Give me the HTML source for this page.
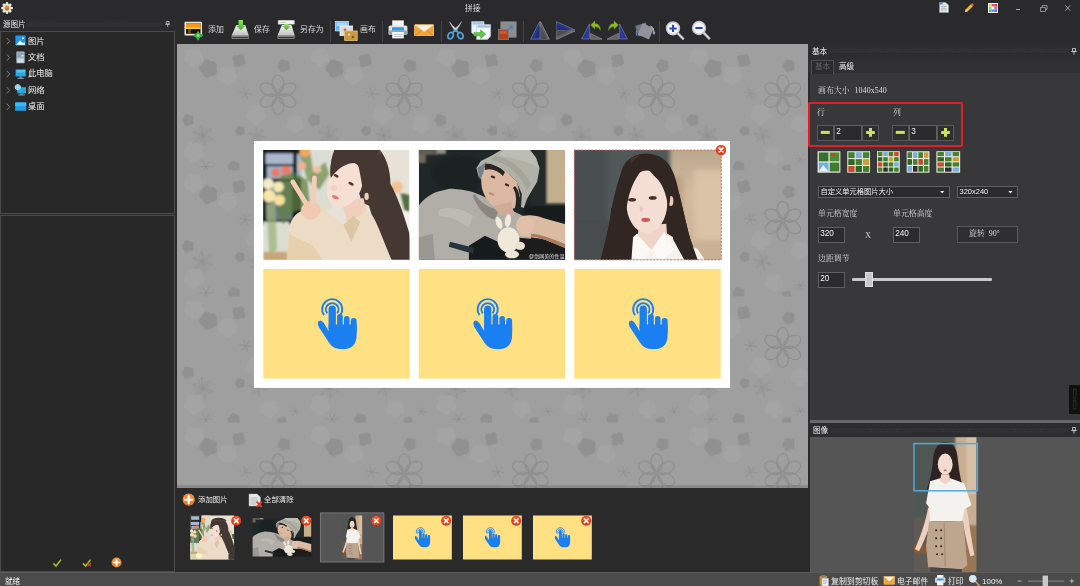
<!DOCTYPE html>
<html lang="zh-CN">
<head>
<meta charset="utf-8">
<title>拼接</title>
<style>
*{box-sizing:border-box;margin:0;padding:0}
html,body{width:1080px;height:586px;overflow:hidden;background:#2a2a2c}
body{position:relative;font-family:"Liberation Sans","Noto Sans CJK SC",sans-serif;font-size:8px;color:#e6e6e6;line-height:1}
.abs{position:absolute}
svg{position:absolute;display:block;overflow:hidden}
.t,.tb,.tree,.inp{will-change:transform}
.t{position:absolute;white-space:nowrap;line-height:10px;height:10px}
.serif{font-family:"Liberation Serif","Noto Serif CJK SC",serif}
#titlebar{left:0;top:0;width:1080px;height:18px;background:#2a2a2c}
#toolbar{left:175px;top:18px;width:905px;height:26px;background:#2a2a2c}
#left{left:0;top:18px;width:177px;height:554px;background:#2b2b2c}
#canvas{left:177px;top:44px;width:630.6px;height:444px;background:#9f9f9f;overflow:hidden}
#strip{left:177px;top:488px;width:630.6px;height:84px;background:#2a2a2a}
#right{left:808px;top:44px;width:272px;height:376px;background:#38383b}
#imgpanel{left:808px;top:420px;width:272px;height:152px;background:#555}
#status{left:0;top:572px;width:1080px;height:14px;background:#4b4b4b;border-top:1px solid #5b5b5b}
.inp{position:absolute;background:#2b2b2d;border:1px solid #606062;color:#f0f0f0;font-size:8.2px;line-height:9px;padding:1.4px 0 0 1.2px;overflow:hidden;white-space:nowrap}
.btn{position:absolute;background:#2f2f31;border:1px solid #58585a}
.sep{position:absolute;top:3px;width:1px;height:21px;background:#444}
.tb{position:absolute;top:7.2px;font-size:7.9px;line-height:10px;white-space:nowrap;color:#dcdcdc}
.tree{position:absolute;left:27.9px;font-size:8.3px;line-height:10px;white-space:nowrap;color:#f0f0f0}
</style>
</head>
<body>
<svg width="0" height="0" style="position:absolute">
<defs>
<filter id="b1" x="-10%" y="-10%" width="120%" height="120%"><feGaussianBlur stdDeviation="1.2"/></filter>
<filter id="b2" x="-10%" y="-10%" width="120%" height="120%"><feGaussianBlur stdDeviation="2.2"/></filter>
<filter id="b05" x="-10%" y="-10%" width="120%" height="120%"><feGaussianBlur stdDeviation="0.5"/></filter>
<linearGradient id="gwall" x1="0" y1="0" x2="0" y2="1"><stop offset="0" stop-color="#b9a68c"/><stop offset="0.4" stop-color="#d3bb9f"/><stop offset="1" stop-color="#c9ae92"/></linearGradient>
<radialGradient id="gx" cx="0.5" cy="0.3" r="0.7"><stop offset="0" stop-color="#f2603a"/><stop offset="1" stop-color="#d8340f"/></radialGradient>
<radialGradient id="go" cx="0.5" cy="0.3" r="0.7"><stop offset="0" stop-color="#f7a24a"/><stop offset="1" stop-color="#e2711a"/></radialGradient>
<!-- close badge -->
<symbol id="xb" viewBox="0 0 12 12"><circle cx="6" cy="6" r="5.4" fill="url(#gx)"/><path d="M4.1 4.1L7.9 7.9M7.9 4.1L4.1 7.9" stroke="#fff" stroke-width="1.7" stroke-linecap="round"/></symbol>
<!-- orange plus -->
<symbol id="op" viewBox="0 0 14 14"><circle cx="7" cy="7" r="6.4" fill="url(#go)"/><path d="M7 3.2V10.8M3.2 7H10.8" stroke="#fff" stroke-width="2.2" stroke-linecap="round"/></symbol>
<!-- hand pointer -->
<symbol id="hand" viewBox="0 0 40 52">
<g fill="#1a80f2">
<rect x="11" y="7.8" width="7.4" height="26" rx="3.7"/>
<rect x="19.6" y="16.3" width="5.8" height="16" rx="2.9"/>
<rect x="26.6" y="18.4" width="5.6" height="16" rx="2.8"/>
<rect x="33.4" y="20.4" width="6.1" height="16" rx="3"/>
<path d="M11 27V33.5L6.2 25.4Q3.4 21.4 0.9 23.6Q-1 25.6 1.4 30L11.5 45.5Q15.5 52 24.5 52Q39.5 52 39.5 37V27Z"/>
</g>
<g fill="none" stroke="#1a80f2" stroke-width="2">
<path d="M9.6 15.6A6.4 6.4 0 1 1 19.8 15.6"/>
<path d="M6.4 17.4A10.2 10.2 0 1 1 23 17.4"/>
</g>
</symbol>

<!-- photo 1 -->
<symbol id="p1" viewBox="0 0 146 110" preserveAspectRatio="none">
<rect width="146" height="110" fill="#e7e2d8"/>
<g filter="url(#b1)">
<rect x="-3" y="-3" width="41" height="78" fill="#191b1e"/>
<rect x="2.4" y="3.4" width="27.4" height="10.6" fill="#a9b8cc"/>
<rect x="33.6" y="4" width="5" height="24" fill="#a9b8c8"/>
<rect x="3.6" y="16.2" width="26" height="12.6" fill="#9fb0c6"/>
<rect x="3" y="32" width="26" height="38" fill="#6c7a84"/>
<rect x="38" y="0" width="30" height="60" fill="#dcddd2"/>
<rect x="0" y="72" width="26" height="38" fill="#dcddd2"/>
<rect x="0" y="102" width="24" height="10" fill="#c9a578"/>
<g opacity="0.72">
<path d="M17 26L30 22L44 30L47 56L30 62L20 75L14 60Z" fill="#5f8040"/>
<path d="M36 3L47 2L50 22L62 12L66 24L56 40L44 30Z" fill="#6f8e4c"/>
<path d="M3 55L12 52L14 100L6 104Z" fill="#9ab47a"/>
</g>
<circle cx="12.6" cy="22.7" r="4.3" fill="#ea7a66"/><circle cx="22.8" cy="20.5" r="4.8" fill="#ec7c64"/>
<circle cx="4.9" cy="33.8" r="5.6" fill="#f4ecc8"/><circle cx="15.2" cy="36.9" r="5.4" fill="#f5e9b4"/>
<circle cx="6" cy="46" r="6.4" fill="#f7e6a8"/><circle cx="16.2" cy="50.2" r="5.6" fill="#f6e09a"/>
<circle cx="41.8" cy="1.5" r="5.6" fill="#f2a75e"/><circle cx="38.7" cy="15.9" r="4.2" fill="#f0b08c"/><circle cx="54" cy="19.5" r="3.8" fill="#efc2a2"/>
<circle cx="133.4" cy="37" r="6" fill="#f1c291"/><path d="M137 43L146 45L146 62L141 60Z" fill="#4f6e3c"/>
<rect x="136" y="62" width="10" height="22" fill="#f4f2ee"/>
<rect x="126" y="84" width="22" height="28" fill="#efece6"/>
</g>
<g filter="url(#b05)">
<path d="M72 -2C68 6 66.5 16 67.5 28L92 30L100 58L104 50L111 75L128.7 112L148 112L146 84C141 66 133 44 127 34C127 18 122 6 115 -2Z" fill="#453933"/>
<path d="M76 -2C84 2 94 8 98 18C104 10 112 6 118 4L115 -2Z" fill="#57493f"/>
<path d="M24.4 112L25.5 79C28 68 33 63 37.7 61.5L60 57L80 75L102 59C108 62 112 70 115.4 79L128.7 112Z" fill="#ecdcc5"/>
<path d="M24.4 112L25.5 84L50 96L60 112Z" fill="#e6d0ae"/>
<path d="M78 52L100 48L103 61L84 73Z" fill="#f0cfbd"/>
<path d="M80 75L90 66L97 72L88 92Z" fill="#dcc6a6"/>
<ellipse cx="81.5" cy="34.5" rx="16.8" ry="23.5" transform="rotate(24 81.5 34.5)" fill="#f7dfd3"/>
<path d="M67.5 28C66 18 68 8 72 0L116 0C114 8 108 12 102 14C100 22 102 34 100 44C98 30 96 20 94.4 13.3C86 12 76 16 67.5 28Z" fill="#453933"/>
<path d="M100 20C104 28 105 40 102 54L106 56C110 42 108 28 104 18Z" fill="#453933"/>
<ellipse cx="103.2" cy="46.5" rx="2.2" ry="3.6" fill="#f0cbb8"/>
<ellipse cx="72.8" cy="25.8" rx="2.7" ry="1.5" transform="rotate(25 72.8 25.8)" fill="#54362e"/><ellipse cx="87.7" cy="33.8" rx="2.9" ry="1.5" transform="rotate(25 87.7 33.8)" fill="#54362e"/>
<ellipse cx="72" cy="47.4" rx="3.6" ry="1.6" transform="rotate(24 72 47.4)" fill="#e8776f"/>
<ellipse cx="70.5" cy="38" rx="3.4" ry="2.6" fill="#f5cfc4"/>
<circle cx="47.7" cy="60.4" r="9.6" fill="#f1c9b0"/>
<path d="M29.5 31.8L41.8 52" stroke="#f3cdb6" stroke-width="4.8" stroke-linecap="round"/>
<path d="M51.2 28L50 52" stroke="#f3cdb6" stroke-width="4.8" stroke-linecap="round"/>
</g>
</symbol>
<!-- photo 2 -->
<symbol id="p2" viewBox="0 0 146 110" preserveAspectRatio="none">
<rect width="146" height="110" fill="#1f2728"/>
<g filter="url(#b1)">
<rect x="-3" y="-3" width="21" height="8" fill="#5e5c52"/>
<rect x="-3" y="4" width="10" height="9" fill="#6e6a5c"/>
<rect x="18" y="-2" width="9" height="6" fill="#8f8f88"/>
<rect x="127.4" y="-3" width="22" height="56.5" fill="#c3af8d"/>
<rect x="112" y="-3" width="15.4" height="58" fill="#222a2b"/>
<rect x="105" y="56" width="44" height="16" fill="#171b1b"/>
<ellipse cx="40" cy="24" rx="26" ry="18" fill="#1a2223"/>
</g>
<g filter="url(#b05)">
<path d="M-2 112L-2 58C4 50 10 45 17.4 42L30.7 38.9C40 39 50 41 56.4 43C70 48 82 56 96 62L112 70L112 112Z" fill="#b0aea7"/>
<path d="M-2 88L14 84L16 112L-2 112Z" fill="#9a9892"/>
<path d="M20 60C30 56 44 58 54 66L50 78C40 70 30 66 20 66Z" fill="#bcbab3"/>
<path d="M56 44C60 52 70 58 80 60L76 70C64 66 58 56 54 46Z" fill="#8a8780"/>
<path d="M62 24L68 12L84 18L98 32L101 46L96 58L84 62L75.5 57C68 52 63 42 62.5 34.8Z" fill="#dab8a1"/>
<path d="M74 56L92 52L96 66L80 64Z" fill="#cfac95"/>
<path d="M66 14C72 12 80 16 86 22L84 26C78 20 72 18 66 20Z" fill="#2c2622"/>
<path d="M96 36C100 40 102 48 100 56L96 58C98 50 97 42 94 38Z" fill="#2a2420"/>
<path d="M57.5 18L62 11L72 6L82.3 0L111 0L117 8L120.5 18.4L118.1 31.8L112 42L107.9 49.2L104.8 58L102 57L102.8 44L97.6 31.8L90 24L82.3 18.4L72 14L66.9 12.5L62 22L60 28Z" fill="#b1b2a7"/>
<path d="M84 0L111 0L117 8L120 18C110 12 96 8 80 6Z" fill="#bdbeb3"/>
<path d="M72 10C86 12 100 22 108 40L112 34C104 18 90 8 76 6Z" fill="#a4a598"/>
<path d="M58.4 18L66.9 12.5L64 24L61 30Z" fill="#76808a"/>
<ellipse cx="74" cy="27" rx="2.4" ry="1.2" transform="rotate(20 74 27)" fill="#3a2a24"/><ellipse cx="88" cy="35" rx="2.4" ry="1.2" transform="rotate(25 88 35)" fill="#3a2a24"/>
<ellipse cx="72.5" cy="44" rx="3" ry="1.3" transform="rotate(22 72.5 44)" fill="#c48a7c"/>
<path d="M50 96L66 86L92 98L130 100L148 112L50 112Z" fill="#181a1a"/>
<path d="M100 88L148 92L148 112L100 112Z" fill="#1b1d1d"/>
<path d="M31 92L55 98L54 104L30 97Z" fill="#27333c"/>
<path d="M100 68C106 64 116 65 124 68L148 75L148 99L126 90C116 87 106 88 100 86Z" fill="#dcbba3"/><path d="M112 84C120 84 130 88 148 95L148 99L126 90C120 88 116 87 112 87Z" fill="#a87c5e"/>
<ellipse cx="106" cy="75.5" rx="9" ry="9.5" fill="#e0c0a9"/>
<ellipse cx="89.5" cy="90" rx="11" ry="12.5" fill="#f0e9da"/>
<ellipse cx="80" cy="73" rx="3" ry="6.4" transform="rotate(-20 80 73)" fill="#f1eadc"/>
<ellipse cx="89" cy="70.6" rx="3" ry="6.6" transform="rotate(8 89 70.6)" fill="#f1eadc"/>
<ellipse cx="101" cy="96" rx="5" ry="4" fill="#ebe3d2"/>
<ellipse cx="93" cy="104.5" rx="7" ry="4" fill="#ece4d4"/>
</g>
</symbol>
<!-- photo 3 (crop) -->
<symbol id="p3" viewBox="0 0 147 110" preserveAspectRatio="none">
<rect width="147" height="110" fill="#505859"/>
<g filter="url(#b2)">
<rect x="95.7" y="-4" width="56" height="118" fill="url(#gwall)"/>
<rect x="120" y="20" width="32" height="70" fill="#dcc5a9" opacity="0.8"/>
<rect x="97" y="26" width="12" height="88" fill="#bfa386"/>
<rect x="-4" y="-4" width="36" height="118" fill="#485051"/>
<rect x="-4" y="70" width="50" height="44" fill="#464e4e"/>
</g>
<g filter="url(#b05)">
<path d="M70.4 3.5C58 4 49 12 47 22C42 36 39 50 37.4 58C36 72 32 88 26 112L124 112C120 100 115 88 113 78C110 66 108 56 105 44C103 34 100 24 97.7 20C93 9 83 3.5 70.4 3.5Z" fill="#30262300"/>
<path d="M70.4 3.5C58 4 49 12 47 22C42 36 39 50 37.4 58C36 72 32 88 26 112L124 112C120 100 115 88 113 78C110 66 108 56 105 44C103 34 100 24 97.7 20C93 9 83 3.5 70.4 3.5Z" fill="#302623"/>
<path d="M56 8C62 5 70 4 76 5C70 10 64 20 60 34C58 26 56 16 56 8Z" fill="#43362f"/>
<path d="M28 112L44 100L62.7 84L76 92L90 82L106 92L123 99L132 112Z" fill="#f5f1eb"/>
<path d="M64.6 76L92 74L93 90L78 100L63 90Z" fill="#efd4c7"/>
<path d="M62.7 84L76 99L70 112L54 104Z" fill="#fbf9f6"/><path d="M90 82L78 99L86 112L100 100Z" fill="#fbf9f6"/>
<path d="M37 58L52 60L59 84L57 112L26 112C32 88 36 72 37 58Z" fill="#302623"/><path d="M94 60L105 44C108 56 110 66 113 78C115 88 120 100 124 112L111 112L99 90Z" fill="#302623"/>
<ellipse cx="72.5" cy="52" rx="20.6" ry="31.4" fill="#f4ddd2"/>
<ellipse cx="96.5" cy="51" rx="2.6" ry="5" fill="#eccdbd"/>
<path d="M70.4 4C60 6 52 18 50 34C49 44 50 54 52 62C53 50 56 38 62 28C66 22 69 16 70.4 12Z" fill="#302623"/>
<path d="M70.4 4C82 6 92 16 95 32C97 42 96 52 94 60C93 48 90 38 84 30C78 24 72 18 70.4 12Z" fill="#302623"/>
<ellipse cx="57.8" cy="49.8" rx="4" ry="1.8" fill="#4a2c28"/><ellipse cx="78.4" cy="48" rx="4" ry="1.8" fill="#4a2c28"/>
<ellipse cx="71.4" cy="70" rx="4.4" ry="2.2" fill="#cf5a58"/>
<ellipse cx="67" cy="59" rx="1.6" ry="3" fill="#ecc8bc"/>
</g>
</symbol>
<!-- photo 3 full length -->
<symbol id="p3f" viewBox="0 0 62 135" preserveAspectRatio="none">
<rect width="62" height="135" fill="#4f5755"/>
<g filter="url(#b1)">
<rect x="41" y="-3" width="24" height="141" fill="#c8ad90"/>
<rect x="52" y="-3" width="13" height="60" fill="#d6bfa3"/>
<rect x="-3" y="80" width="20" height="58" fill="#5f5a52"/>
<rect x="-3" y="108" width="16" height="8" fill="#8a5a34"/>
<rect x="44" y="88" width="20" height="50" fill="#9a7452"/>
</g>
<g filter="url(#b05)">
<path d="M31 5C23 5 19.5 13 19 22C18.5 32 16 42 12.5 53L24 50L40 50L48.5 49C45.5 40 44.5 30 43.5 22C43 12 39 5 31 5Z" fill="#2e2320"/>
<path d="M14 70C12 84 6 100 1 112L5 114C11 102 17 88 19 74Z" fill="#eed0c0"/>
<path d="M52 70C55 86 57 102 60 118L56 119C52 104 49 88 47 74Z" fill="#eed0c0"/>
<path d="M16 44L26 41L36 41L50 46L57 68L50 72L48 84L16 84L15 70L12 66Z" fill="#f4f2ee"/>
<path d="M27 37L35 37L36 44L31 47L26 44Z" fill="#eed3c6"/>
<ellipse cx="31" cy="27" rx="7.4" ry="10.6" fill="#f2dbd0"/>
<path d="M23.4 27C23.4 19 27 15 31 13.6C35 15 38.4 19 38.8 28C40.6 20 38 10.6 31 10C24 10.6 21.6 20 23.4 27Z" fill="#2e2320"/>
<path d="M15 84L49 84L53 128L48 132L14 130L12 108Z" fill="#bda58e"/>
<path d="M30 86L31 130" stroke="#a08a74" stroke-width="1"/>
<g fill="#2a2624"><circle cx="22" cy="93" r="1"/><circle cx="27" cy="93" r="1"/><circle cx="22" cy="101" r="1"/><circle cx="27" cy="101" r="1"/><circle cx="22" cy="109" r="1"/><circle cx="27" cy="109" r="1"/><circle cx="23" cy="117" r="1"/><circle cx="28" cy="117" r="1"/></g>
<path d="M16 130L48 132L47 136L17 136Z" fill="#4a4644"/>
<ellipse cx="31" cy="33" rx="1.5" ry="0.7" fill="#c9524f"/>
</g>
</symbol>
<pattern id="flor" x="177" y="44" width="126.2" height="126.2" patternUnits="userSpaceOnUse"><rect width="127" height="127" fill="#9f9f9f"/><g filter="url(#b05)"><g fill="#a4a4a4"><circle cx="55.2" cy="32.8" r="4.9"/><circle cx="50.6" cy="36.2" r="4.9"/><circle cx="45.8" cy="32.9" r="4.9"/><circle cx="47.5" cy="27.3" r="4.9"/><circle cx="53.3" cy="27.3" r="4.9"/><circle cx="50.5" cy="31.3" r="3.3"/></g><g fill="#a4a4a4"><circle cx="21.7" cy="14.5" r="4.9"/><circle cx="17.1" cy="17.9" r="4.9"/><circle cx="12.3" cy="14.6" r="4.9"/><circle cx="14.0" cy="9.0" r="4.9"/><circle cx="19.8" cy="9.0" r="4.9"/><circle cx="17" cy="13" r="3.3"/></g><g fill="#a4a4a4"><circle cx="22.0" cy="109.5" r="5.2"/><circle cx="17.1" cy="113.2" r="5.2"/><circle cx="12.1" cy="109.7" r="5.2"/><circle cx="13.9" cy="103.8" r="5.2"/><circle cx="20.0" cy="103.8" r="5.2"/><circle cx="17" cy="108" r="3.5"/></g><g fill="#a4a4a4"><circle cx="84.0" cy="71.5" r="5.2"/><circle cx="79.1" cy="75.2" r="5.2"/><circle cx="74.1" cy="71.7" r="5.2"/><circle cx="75.9" cy="65.8" r="5.2"/><circle cx="82.0" cy="65.8" r="5.2"/><circle cx="79" cy="70" r="3.5"/></g><g fill="#a4a4a4"><circle cx="122.5" cy="81.4" r="4.7"/><circle cx="118.1" cy="84.7" r="4.7"/><circle cx="113.6" cy="81.5" r="4.7"/><circle cx="115.2" cy="76.3" r="4.7"/><circle cx="120.7" cy="76.2" r="4.7"/><circle cx="118" cy="80" r="3.1"/></g><g fill="#a4a4a4"><circle cx="96.5" cy="113.4" r="4.7"/><circle cx="92.1" cy="116.7" r="4.7"/><circle cx="87.6" cy="113.5" r="4.7"/><circle cx="89.2" cy="108.3" r="4.7"/><circle cx="94.7" cy="108.2" r="4.7"/><circle cx="92" cy="112" r="3.1"/></g><g fill="#919191"><circle cx="35.4" cy="27.1" r="4.7"/><circle cx="30.2" cy="29.0" r="4.7"/><circle cx="26.8" cy="24.6" r="4.7"/><circle cx="29.9" cy="20.1" r="4.7"/><circle cx="35.2" cy="21.6" r="4.7"/><circle cx="31.5" cy="24.5" r="3.1"/></g><g fill="#919191"><circle cx="64.9" cy="18.4" r="3.5"/><circle cx="60.0" cy="19.3" r="3.5"/><circle cx="59.1" cy="14.4" r="3.5"/><circle cx="64.0" cy="13.5" r="3.5"/><circle cx="62" cy="16.4" r="2.4"/></g><g fill="#919191"><circle cx="109.7" cy="23.5" r="3.2"/><circle cx="106.1" cy="24.8" r="3.2"/><circle cx="103.8" cy="21.8" r="3.2"/><circle cx="105.9" cy="18.7" r="3.2"/><circle cx="109.6" cy="19.7" r="3.2"/><circle cx="107" cy="21.7" r="2.2"/></g><g fill="#919191"><circle cx="13.6" cy="77.8" r="3.1"/><circle cx="10.1" cy="79.0" r="3.1"/><circle cx="7.9" cy="76.1" r="3.1"/><circle cx="10.0" cy="73.1" r="3.1"/><circle cx="13.5" cy="74.1" r="3.1"/><circle cx="11" cy="76" r="2.1"/></g><g fill="#919191"><circle cx="65.1" cy="88.2" r="2.6"/><circle cx="62.3" cy="89.2" r="2.6"/><circle cx="60.4" cy="86.8" r="2.6"/><circle cx="62.1" cy="84.3" r="2.6"/><circle cx="65.1" cy="85.1" r="2.6"/><circle cx="63" cy="86.7" r="1.8"/></g><g fill="#919191"><circle cx="59.6" cy="124.8" r="3.1"/><circle cx="56.1" cy="126.0" r="3.1"/><circle cx="53.9" cy="123.1" r="3.1"/><circle cx="56.0" cy="120.1" r="3.1"/><circle cx="59.5" cy="121.1" r="3.1"/><circle cx="57" cy="123" r="2.1"/></g><g fill="#919191"><circle cx="107.2" cy="127.0" r="2.7"/><circle cx="103.5" cy="127.7" r="2.7"/><circle cx="102.8" cy="124.0" r="2.7"/><circle cx="106.5" cy="123.3" r="2.7"/><circle cx="105" cy="125.5" r="1.8"/></g><g fill="none" stroke="#8b8b8b" stroke-width="1.0"><ellipse cx="112.0" cy="51" rx="9.0" ry="5.8" transform="rotate(-90 101 51)"/><ellipse cx="112.0" cy="51" rx="9.0" ry="5.8" transform="rotate(-30 101 51)"/><ellipse cx="112.0" cy="51" rx="9.0" ry="5.8" transform="rotate(30 101 51)"/><ellipse cx="112.0" cy="51" rx="9.0" ry="5.8" transform="rotate(90 101 51)"/><ellipse cx="112.0" cy="51" rx="9.0" ry="5.8" transform="rotate(150 101 51)"/><ellipse cx="112.0" cy="51" rx="9.0" ry="5.8" transform="rotate(210 101 51)"/></g><path d="M101 51L107.5 39.7M101 51L114.0 51.0M101 51L107.5 62.3M101 51L94.5 62.3M101 51L88.0 51.0M101 51L94.5 39.7" stroke="#8e8e8e" stroke-width="0.7" fill="none"/><path d="M68.6 49.3L75.0 50.4M68.6 49.3L70.8 55.4M68.6 49.3L64.4 54.3M68.6 49.3L62.2 48.2M68.6 49.3L66.4 43.2M68.6 49.3L72.8 44.3" stroke="#8e8e8e" stroke-width="0.8" fill="none"/><path d="M26 91.5L36.3 95.3M26 91.5L27.9 102.3M26 91.5L17.6 98.6M26 91.5L15.7 87.7M26 91.5L24.1 80.7M26 91.5L34.4 84.4" stroke="#8e8e8e" stroke-width="0.9" fill="none"/><g fill="none" stroke="#939393" stroke-width="0.5"><ellipse cx="31.5" cy="91.5" rx="4.5" ry="2.4" transform="rotate(20 26 91.5)"/><ellipse cx="31.5" cy="91.5" rx="4.5" ry="2.4" transform="rotate(80 26 91.5)"/><ellipse cx="31.5" cy="91.5" rx="4.5" ry="2.4" transform="rotate(140 26 91.5)"/><ellipse cx="31.5" cy="91.5" rx="4.5" ry="2.4" transform="rotate(200 26 91.5)"/><ellipse cx="31.5" cy="91.5" rx="4.5" ry="2.4" transform="rotate(260 26 91.5)"/><ellipse cx="31.5" cy="91.5" rx="4.5" ry="2.4" transform="rotate(320 26 91.5)"/></g><path d="M29 122.8L36.0 122.8M29 122.8L32.5 128.9M29 122.8L25.5 128.9M29 122.8L22.0 122.8M29 122.8L25.5 116.7M29 122.8L32.5 116.7" stroke="#8e8e8e" stroke-width="0.8" fill="none"/><path d="M80.6 91.5L89.3 93.8M80.6 91.5L82.9 100.2M80.6 91.5L74.2 97.9M80.6 91.5L71.9 89.2M80.6 91.5L78.3 82.8M80.6 91.5L87.0 85.1" stroke="#8e8e8e" stroke-width="0.8" fill="none"/><g fill="none" stroke="#959595" stroke-width="0.4"><ellipse cx="85.0" cy="91.5" rx="3.6" ry="1.9" transform="rotate(15 80.6 91.5)"/><ellipse cx="85.0" cy="91.5" rx="3.6" ry="1.9" transform="rotate(75 80.6 91.5)"/><ellipse cx="85.0" cy="91.5" rx="3.6" ry="1.9" transform="rotate(135 80.6 91.5)"/><ellipse cx="85.0" cy="91.5" rx="3.6" ry="1.9" transform="rotate(195 80.6 91.5)"/><ellipse cx="85.0" cy="91.5" rx="3.6" ry="1.9" transform="rotate(255 80.6 91.5)"/><ellipse cx="85.0" cy="91.5" rx="3.6" ry="1.9" transform="rotate(315 80.6 91.5)"/></g><path d="M118.5 115L123.5 115.4M118.5 115L120.6 119.5M118.5 115L115.6 119.1M118.5 115L113.5 114.6M118.5 115L116.4 110.5M118.5 115L121.4 110.9" stroke="#8e8e8e" stroke-width="0.7" fill="none"/></g></pattern>
</defs>
</svg>
<div id="titlebar" class="abs">
<svg style="left:1px;top:2px" width="12" height="12" viewBox="0 0 24 24">
<g fill="#eeeae4"><ellipse cx="12" cy="4.5" rx="3" ry="4.5"/><ellipse cx="12" cy="19.5" rx="3" ry="4.5"/><ellipse cx="4.5" cy="12" rx="4.5" ry="3"/><ellipse cx="19.5" cy="12" rx="4.5" ry="3"/>
<ellipse cx="6.7" cy="6.7" rx="3" ry="4.3" transform="rotate(-45 6.7 6.7)"/><ellipse cx="17.3" cy="6.7" rx="3" ry="4.3" transform="rotate(45 17.3 6.7)"/><ellipse cx="6.7" cy="17.3" rx="3" ry="4.3" transform="rotate(45 6.7 17.3)"/><ellipse cx="17.3" cy="17.3" rx="3" ry="4.3" transform="rotate(-45 17.3 17.3)"/></g>
<circle cx="12" cy="12" r="5" fill="#e8862a"/><path d="M8 13a4 4 0 0 0 8 0z" fill="#6f9a2c"/>
</svg>
<div class="t" style="left:465px;top:4.2px;font-size:7.8px;color:#dadada">拼接</div>
<svg style="left:939px;top:2px" width="10" height="11" viewBox="0 0 10 11"><path d="M0.5 0.5H6.5L9.5 3V10.5H0.5Z" fill="#e6e8ea" stroke="#9aa0a8" stroke-width="0.6"/><rect x="0.5" y="0.5" width="3" height="2" fill="#3f86d8"/><path d="M2 4.5H7.5M2 6.3H7.5M2 8.1H7.5" stroke="#9aa2ac" stroke-width="0.7"/></svg>
<svg style="left:964px;top:3px" width="10" height="10" viewBox="0 0 10 10"><path d="M1 9L1.8 6.2L6.8 1.2L8.8 3.2L3.8 8.2Z" fill="#f1b72c"/><path d="M6.8 1.2L7.6 0.4Q8.2 0 8.8 0.6L9.5 1.3Q10 1.9 9.5 2.5L8.8 3.2Z" fill="#e2574a"/><path d="M1 9L1.8 6.2L3.8 8.2Z" fill="#f3dcb0"/></svg>
<svg style="left:988px;top:3px" width="10" height="10" viewBox="0 0 10 10"><rect width="10" height="10" fill="#f4f4f4"/><rect x="1" y="1" width="2.6" height="2.6" fill="#f5d33a"/><rect x="3.7" y="1" width="2.6" height="2.6" fill="#ef4d8a"/><rect x="6.4" y="1" width="2.6" height="2.6" fill="#e4393c"/><rect x="1" y="3.7" width="2.6" height="2.6" fill="#8ed24a"/><rect x="3.7" y="3.7" width="2.6" height="2.6" fill="#fff"/><rect x="6.4" y="3.7" width="2.6" height="2.6" fill="#c05adf"/><rect x="1" y="6.4" width="2.6" height="2.6" fill="#3fc6a0"/><rect x="3.7" y="6.4" width="2.6" height="2.6" fill="#44a6f0"/><rect x="6.4" y="6.4" width="2.6" height="2.6" fill="#5b6be6"/></svg>
<svg style="left:1014px;top:3px" width="60" height="10" viewBox="0 0 60 10"><path d="M2 6.5H6" stroke="#a8a8a8" stroke-width="1"/><path d="M26.5 4.5H31.5V8.5H26.5ZM28 4.5V2.5H33V6.5H31.5" fill="none" stroke="#9a9a9a" stroke-width="0.9"/><path d="M51.3 2.3L56.3 7.7M56.3 2.3L51.3 7.7" stroke="#b0b0b0" stroke-width="0.9"/></svg>
</div>
<div id="toolbar" class="abs">
<!-- add -->
<svg style="left:9px;top:3px" width="20" height="20" viewBox="0 0 20 20">
<rect x="0.5" y="0.8" width="17.5" height="13.6" rx="1" fill="#e9e9e6"/><rect x="2" y="2.2" width="14.5" height="10.6" fill="#1b1405"/><rect x="2" y="2.2" width="14.5" height="5" fill="#f39a13"/><rect x="2" y="6.4" width="14.5" height="1.6" fill="#f8cd3c"/><rect x="4" y="8" width="3" height="4.8" fill="#6b4a08"/>
<path d="M14.6 10.4Q15.2 12.8 18.6 13.6Q19.6 14.4 18.6 15.2Q15.4 16 14.8 19Q14.2 19.8 13.4 19Q12.8 16 10 15.4Q9.2 14.4 10 13.6Q12.8 13 13.4 10.4Q14 9.6 14.6 10.4Z" fill="#3cae48"/><circle cx="14.2" cy="14.4" r="1.6" fill="#7fdc7a"/>
</svg>
<div class="tb" style="left:33px">添加</div>
<!-- save -->
<svg style="left:55px;top:2px" width="20" height="20" viewBox="0 0 20 20">
<defs><linearGradient id="gd" x1="0" y1="0" x2="0" y2="1"><stop offset="0" stop-color="#f6f6f4"/><stop offset="1" stop-color="#bfc1bf"/></linearGradient><linearGradient id="gg" x1="0" y1="0" x2="0" y2="1"><stop offset="0" stop-color="#8ee468"/><stop offset="1" stop-color="#46ae2a"/></linearGradient></defs>
<path d="M6.3 5H15.2L18.9 15.8H1.5Z" fill="url(#gd)"/><path d="M1.5 15.8H18.9V18.3Q18.9 19.1 18 19.1H2.4Q1.5 19.1 1.5 18.3Z" fill="#7e807e"/><rect x="2.6" y="17.2" width="15.2" height="0.9" fill="#2a2b2a"/>
<path d="M8.5 0H13V5.4H15.6L10.75 10.2L5.9 5.4H8.5Z" fill="url(#gg)"/>
</svg>
<div class="tb" style="left:79px">保存</div>
<!-- save as -->
<svg style="left:101px;top:2px" width="20" height="20" viewBox="0 0 20 20">
<path d="M5.85 5H15.5L18.8 15.8H1.4Z" fill="url(#gd)"/><path d="M1.4 15.8H18.8V18.3Q18.8 19.1 17.9 19.1H2.3Q1.4 19.1 1.4 18.3Z" fill="#7e807e"/><rect x="2.5" y="17.2" width="15.2" height="0.9" fill="#2a2b2a"/>
<path d="M8.4 3.6H12.5V6H14.7L10.45 10.2L6.2 6H8.4Z" fill="url(#gg)"/>
<rect x="2.1" y="0.3" width="16.3" height="4" rx="0.4" fill="#f7f7f3" stroke="#c2c4be" stroke-width="0.4"/><rect x="3.6" y="1.9" width="7" height="0.9" fill="#b5d49a"/>
</svg>
<div class="tb" style="left:125.4px">另存为</div>
<div class="sep" style="left:155px"></div>
<!-- canvas -->
<svg style="left:160px;top:3px" width="23" height="20" viewBox="0 0 23 20">
<rect x="0.5" y="0.5" width="13" height="9.4" fill="#69b4ee" stroke="#c9e3f8" stroke-width="0.8"/><rect x="1.5" y="1.5" width="11" height="3.6" fill="#a9d6f8"/>
<rect x="5" y="5" width="12.6" height="9.6" fill="#d8dcdf" stroke="#f0f2f3" stroke-width="0.8"/><circle cx="10" cy="9" r="1.4" fill="#d15a4a"/>
<rect x="9.6" y="10" width="12.6" height="9.4" fill="#c9973f" stroke="#e6c272" stroke-width="0.8"/><circle cx="14" cy="13.6" r="1.2" fill="#f0dca0"/><circle cx="18" cy="16" r="1.3" fill="#8a5a1c"/>
</svg>
<div class="tb" style="left:185px">画布</div>
<div class="sep" style="left:207px"></div>
<!-- print -->
<svg style="left:213px;top:2px" width="20" height="19" viewBox="0 0 20 19">
<rect x="4.2" y="0.4" width="11.6" height="6" fill="#f6f7f8"/><rect x="0.6" y="5.4" width="18.8" height="9.6" rx="1.6" fill="#dfe3e8"/><rect x="0.6" y="10.4" width="18.8" height="4.6" rx="1.2" fill="#9aa3ad"/>
<rect x="4" y="7.2" width="12" height="3.4" rx="0.6" fill="#2f9be2"/><rect x="4.2" y="12" width="11.6" height="6.4" fill="#f4f5f6"/><rect x="5.6" y="14" width="8.8" height="0.8" fill="#b8bec4"/><rect x="5.6" y="16" width="8.8" height="0.8" fill="#b8bec4"/>
</svg>
<!-- mail -->
<svg style="left:239px;top:5.6px" width="20.4" height="12.8" viewBox="0 0 21 14" preserveAspectRatio="none">
<rect x="0.4" y="0.8" width="20.2" height="12.6" rx="0.8" fill="#f2a436" stroke="#fbd38a" stroke-width="0.8"/><path d="M0.8 13L8 6.4M20.2 13L13 6.4" stroke="#d9821a" stroke-width="0.8"/><path d="M0.8 1.2H20.2L10.5 8.6Z" fill="#f9efe2" stroke="#e8c9a0" stroke-width="0.5"/>
</svg>
<div class="sep" style="left:266px"></div>
<!-- scissors -->
<svg style="left:272px;top:3px" width="17" height="19" viewBox="0 0 17 19">
<path d="M2.4 0.6Q4 5 8.6 10.4L10.4 8.8Q5 4.6 2.4 0.6Z" fill="#e8eaec" stroke="#b8bcc0" stroke-width="0.4"/><path d="M14.6 0.6Q13 5 8.4 10.4L6.6 8.8Q12 4.6 14.6 0.6Z" fill="#d6dadd" stroke="#b8bcc0" stroke-width="0.4"/>
<ellipse cx="3.6" cy="14.6" rx="2.5" ry="3.3" transform="rotate(24 3.6 14.6)" fill="none" stroke="#4f9fd6" stroke-width="1.8"/><ellipse cx="13.4" cy="14.6" rx="2.5" ry="3.3" transform="rotate(-24 13.4 14.6)" fill="none" stroke="#4f9fd6" stroke-width="1.8"/>
<path d="M8.5 9L5 12M8.5 9L12 12" stroke="#4f9fd6" stroke-width="1.8"/>
</svg>
<!-- copy -->
<svg style="left:296px;top:3px" width="21" height="19" viewBox="0 0 21 19">
<path d="M0.6 0.6H13V13.6H3L0.6 11.6Z" fill="#eef3f8" stroke="#b7c7d8" stroke-width="0.6"/><rect x="1.4" y="1.2" width="10.8" height="2.4" fill="#9cc8ee"/>
<path d="M5.6 3.6H19.6V15L16.6 18.4H5.6Z" fill="#f6f9fc" stroke="#b7c7d8" stroke-width="0.6"/><rect x="6.4" y="4.2" width="12.4" height="2.6" fill="#9cc8ee"/>
<path d="M3 11.4H9.6V8.8L14.8 13.2L9.6 17.6V15H3Z" fill="#63c644" stroke="#3d9c28" stroke-width="0.5"/>
</svg>
<!-- resize -->
<svg style="left:323px;top:3px" width="19" height="19" viewBox="0 0 19 19">
<rect x="2.4" y="0.4" width="16.2" height="16.2" fill="#8b8d92"/><rect x="0.4" y="8.6" width="10" height="10" fill="#b5421f" stroke="#7d7f84" stroke-width="0.8"/><rect x="1.6" y="9.8" width="7.6" height="3" fill="#cc5a34"/>
<path d="M9 10L13.6 5.4M10.6 5H14V8.4" fill="none" stroke="#3a80c8" stroke-width="1.1"/>
</svg>
<div class="sep" style="left:348px"></div>
<!-- flip h -->
<svg style="left:355px;top:3px" width="20" height="19" viewBox="0 0 20 19"><path d="M9.6 0.6V18.2H0.6Z" fill="#28399a" stroke="#8a8c92" stroke-width="0.6"/><path d="M9.6 4L5 16.6H9.6Z" fill="#1f2d7c"/><path d="M10.4 0.6V18.2H19.4Z" fill="#5f6165" stroke="#9a9ca0" stroke-width="0.6"/><path d="M10.4 5V18.2H17Z" fill="#4a4c50"/></svg>
<!-- flip v -->
<svg style="left:381px;top:3px" width="20" height="19" viewBox="0 0 20 19"><path d="M0.6 9H19L0.6 0.6Z" fill="#28399a" stroke="#8a8c92" stroke-width="0.6"/><path d="M0.6 9H14L0.6 3.4Z" fill="#1f2d7c"/><path d="M0.6 10H19L0.6 18.4Z" fill="#5f6165" stroke="#9a9ca0" stroke-width="0.6"/><path d="M0.6 10H13L0.6 15.6Z" fill="#4a4c50"/></svg>
<!-- rotate left -->
<svg style="left:406px;top:2px" width="22" height="20" viewBox="0 0 22 20">
<path d="M8.4 4V19H0.6Z" fill="#28399a" stroke="#8a8c92" stroke-width="0.6"/><path d="M9.6 19.2H21L9.6 13.4Z" fill="#5f6165" stroke="#9a9ca0" stroke-width="0.6"/>
<path d="M9.6 5L14 0.8V3.4Q19.6 3.8 19.4 10.4Q17.8 6.6 14 6.8V9.2Z" fill="#8cb82c" stroke="#5d8214" stroke-width="0.4"/>
</svg>
<!-- rotate right -->
<svg style="left:431px;top:2px" width="22" height="20" viewBox="0 0 22 20">
<g transform="translate(22 0) scale(-1 1)"><path d="M8.4 4V19H0.6Z" fill="#28399a" stroke="#8a8c92" stroke-width="0.6"/><path d="M9.6 19.2H21L9.6 13.4Z" fill="#5f6165" stroke="#9a9ca0" stroke-width="0.6"/>
<path d="M9.6 5L14 0.8V3.4Q19.6 3.8 19.4 10.4Q17.8 6.6 14 6.8V9.2Z" fill="#8cb82c" stroke="#5d8214" stroke-width="0.4"/></g>
</svg>
<!-- free rotate -->
<svg style="left:458px;top:3px" width="23" height="19" viewBox="0 0 23 19">
<rect x="3.6" y="3" width="11" height="11" transform="rotate(-18 9 8.5)" fill="#6f7380"/><rect x="7" y="4.6" width="11.6" height="11.6" transform="rotate(24 12.8 10.4)" fill="#8e929c" stroke="#a7abb4" stroke-width="0.5"/>
<path d="M17.4 5Q21 7 21 12" fill="none" stroke="#a8acb4" stroke-width="1.2"/><path d="M19.4 11.4L21.2 14L22.4 11Z" fill="#a8acb4"/><path d="M3.6 9.4Q2.6 12 4 15" fill="none" stroke="#6d8fc0" stroke-width="1"/>
</svg>
<div class="sep" style="left:484px"></div>
<!-- zoom in -->
<svg style="left:490px;top:2px" width="20" height="20" viewBox="0 0 20 20">
<path d="M12 12.4L18 18.6" stroke="#a2a4a8" stroke-width="2.8" stroke-linecap="round"/><path d="M12 12.4L18 18.6" stroke="#e4e5e8" stroke-width="1.2" stroke-linecap="round"/>
<circle cx="8" cy="8.4" r="6.4" fill="#f4f6fa" stroke="#c4c8d0" stroke-width="1.5"/><path d="M8 4.8V12M4.4 8.4H11.6" stroke="#2446c8" stroke-width="2"/>
</svg>
<!-- zoom out -->
<svg style="left:516px;top:2px" width="20" height="20" viewBox="0 0 20 20">
<path d="M12 12L18 18.2" stroke="#a2a4a8" stroke-width="2.8" stroke-linecap="round"/><path d="M12 12L18 18.2" stroke="#e4e5e8" stroke-width="1.2" stroke-linecap="round"/>
<circle cx="8" cy="8" r="6.4" fill="#f4f6fa" stroke="#c4c8d0" stroke-width="1.5"/><path d="M4.4 8H11.6" stroke="#2446c8" stroke-width="2"/>
</svg>
</div>
<div id="left" class="abs">
<div class="abs" style="left:0;top:0;width:175px;height:13px;background:#2b2b2d"></div>
<div class="abs" style="left:26px;top:4px;width:136px;height:5px;background:#2e2e30 radial-gradient(circle,#3e3e41 0.55px,transparent 0.75px) 0 0/2.25px 2.5px"></div>
<div class="t" style="left:2.5px;top:1.8px;font-size:7.5px;color:#e8e8e8">源图片</div>
<svg style="left:165px;top:3.2px" width="5.4" height="6.4" viewBox="0 0 6 7"><path d="M1.5 0.5H4.5V3.4H1.5ZM0.3 3.6H5.7M3 3.6V6.6" fill="none" stroke="#d8d8d8" stroke-width="0.8"/></svg>
<div class="abs" style="left:0;top:13px;width:175px;height:183px;background:#282828;border:1px solid #4b4b4b;border-left-width:1.5px"></div>
<div class="abs" style="left:0;top:197px;width:175px;height:357px;background:#282828;border:1px solid #4b4b4b;border-left-width:1.5px"></div>
<svg style="left:0;top:13px" width="175" height="100" viewBox="0 31 175 100">
<g fill="none" stroke="#858585" stroke-width="0.9"><path d="M6.8 38L9.6 41.2L6.8 44.4"/><path d="M6.8 54.4L9.6 57.6L6.8 60.8"/><path d="M6.8 70.8L9.6 74L6.8 77.2"/><path d="M6.8 87.2L9.6 90.4L6.8 93.6"/><path d="M6.8 103.6L9.6 106.8L6.8 110"/></g>
<!-- pictures -->
<rect x="15.4" y="35.4" width="10.2" height="10.2" rx="0.8" fill="#2196ea"/><path d="M16.2 44.8L20 40.6L23.4 43.2L24.8 42.2V44.8Z" fill="#fff"/><circle cx="23" cy="38.2" r="0.9" fill="#fff"/>
<!-- documents -->
<rect x="16.4" y="51.6" width="8.2" height="11.6" rx="0.8" fill="#b8c6d6"/><rect x="17.2" y="52.4" width="6.6" height="5.4" fill="#8fa6c0"/><rect x="21.4" y="55.2" width="2" height="1.2" fill="#fff"/><rect x="17.6" y="59.4" width="5.8" height="0.9" fill="#e9eef4"/><rect x="17.6" y="61" width="5.8" height="0.9" fill="#e9eef4"/>
<!-- this pc -->
<rect x="15.6" y="69.4" width="10.2" height="7" fill="#27a9e6"/><rect x="16.4" y="70" width="8.6" height="2.6" fill="#4cc2f2"/><rect x="19.4" y="76.4" width="2.6" height="1.4" fill="#7a8ea0"/><rect x="17.6" y="77.8" width="6.2" height="0.9" fill="#9fb2c2"/>
<!-- network -->
<rect x="17.2" y="87.2" width="8.8" height="6.2" fill="#2ba4e2"/><rect x="20" y="93.4" width="3.2" height="1.2" fill="#7a8ea0"/><rect x="18.4" y="94.6" width="6.4" height="0.8" fill="#9fb2c2"/><circle cx="17.8" cy="87.2" r="2.7" fill="#6cc4f2" stroke="#e2f2fb" stroke-width="0.6"/><path d="M15.2 87.2H20.4M17.8 84.6V89.8" stroke="#e8f6ff" stroke-width="0.5"/>
<!-- desktop -->
<rect x="15.2" y="102.4" width="11" height="8.4" rx="0.6" fill="#1f9fe6"/><rect x="15.2" y="102.4" width="11" height="3.6" fill="#3cb8f2"/>
</svg>
<div class="tree" style="top:17.6px">图片</div>
<div class="tree" style="top:34px">文档</div>
<div class="tree" style="top:50.4px">此电脑</div>
<div class="tree" style="top:66.8px">网络</div>
<div class="tree" style="top:83.2px">桌面</div>
<svg style="left:50px;top:538px" width="76" height="14" viewBox="50 556 76 14">
<path d="M53.4 563.4L56 566L61 559.6" fill="none" stroke="#a4c424" stroke-width="1.5"/>
<path d="M83 563.4L85.6 566L90.6 559.6" fill="none" stroke="#a4c424" stroke-width="1.5"/><path d="M87.6 563L91 566.4M91 563L87.6 566.4" stroke="#e23a1c" stroke-width="1.1"/>
<use href="#op" x="111" y="557" width="11" height="11"/>
</svg>
</div>
<div id="canvas" class="abs">
<svg style="left:0;top:0;will-change:transform" width="631" height="444" viewBox="177 44 631 444">
<rect x="177" y="44" width="631" height="444" fill="url(#flor)"/>
<rect x="177" y="485.2" width="631" height="2.8" fill="#000" opacity="0.13"/>
<rect x="254" y="141" width="476" height="246.9" fill="#fff"/>
<use href="#p1" x="263.2" y="150" width="146.3" height="109.8"/>
<use href="#p2" x="418.8" y="150" width="146.3" height="109.8"/>
<text x="529" y="257.8" font-size="4.6" textLength="35.5" lengthAdjust="spacingAndGlyphs" fill="#e4e4e4" font-family="Liberation Sans,Noto Sans CJK SC,sans-serif">@剑网美的性温</text>
<use href="#p3" x="574.3" y="150" width="147" height="109.8"/>
<rect x="574.3" y="150" width="147" height="109.8" fill="none" stroke="#e2605a" stroke-width="0.9" stroke-dasharray="2 1.4"/>
<use href="#xb" x="715.2" y="144.2" width="11.6" height="11.6"/>
<rect x="263.3" y="268.9" width="146.4" height="109.7" fill="#ffe184"/>
<rect x="418.8" y="268.9" width="146.4" height="109.7" fill="#ffe184"/>
<rect x="574.3" y="268.9" width="146.4" height="109.7" fill="#ffe184"/>
<use href="#hand" x="317.7" y="297.7" width="39.5" height="51.7"/>
<use href="#hand" x="473.2" y="297.7" width="39.5" height="51.7"/>
<use href="#hand" x="628.7" y="297.7" width="39.5" height="51.7"/>
</svg>
</div>
<div id="strip" class="abs">
<svg style="left:0;top:0" width="631" height="84" viewBox="177 488 631 84">
<use href="#op" x="182" y="493" width="13.4" height="13.4"/>
<g><path d="M249 494H257L260.4 497V506H249Z" fill="#e9ebed" stroke="#a8acb0" stroke-width="0.5"/><path d="M250.4 498H258M250.4 500H258M250.4 502H258M250.4 504H256" stroke="#8e949a" stroke-width="0.6"/><path d="M256.6 501.6L261.8 506.8M261.8 501.6L256.6 506.8" stroke="#e03a1a" stroke-width="1.8"/></g>
<!-- thumbs -->
<svg x="190.2" y="515.3" width="44" height="44.2" viewBox="0 0 146 146" preserveAspectRatio="none">
<rect width="146" height="146" fill="#e7e2d8"/>
<g filter="url(#b2)"><rect x="-3" y="-3" width="40" height="24" fill="#1b1d20"/><rect x="3" y="3" width="27" height="12" fill="#a9b8cc"/><rect x="40" y="0" width="26" height="20" fill="#e8d8c0"/><circle cx="44" cy="14" r="6" fill="#f2a75e"/>
<ellipse cx="95" cy="19" rx="25" ry="11" fill="#453933"/></g>
<use href="#p1" x="0" y="18" width="146" height="110"/>
<g filter="url(#b2)"><rect x="-3" y="127" width="30" height="22" fill="#dcd3b4"/><rect x="24" y="127" width="108" height="22" fill="#ecdcc5"/><rect x="127" y="127" width="22" height="22" fill="#453933"/><ellipse cx="30" cy="134" rx="11" ry="9" fill="#fff4c4"/></g>
</svg>
<use href="#p2" x="252.6" y="518" width="58.6" height="38.4"/>
<rect x="320.4" y="512.9" width="63.5" height="49.1" fill="#555" stroke="#7d7d7d" stroke-width="0.9"/>
<use href="#p3f" x="342" y="515.5" width="20.2" height="44"/>
<rect x="393" y="515.5" width="58.8" height="44" fill="#ffe184"/><use href="#hand" x="414.6" y="527" width="15.8" height="20.6"/>
<rect x="463" y="515.5" width="58.8" height="44" fill="#ffe184"/><use href="#hand" x="484.6" y="527" width="15.8" height="20.6"/>
<rect x="533" y="515.5" width="58.8" height="44" fill="#ffe184"/><use href="#hand" x="554.6" y="527" width="15.8" height="20.6"/>
<use href="#xb" x="230.6" y="515.2" width="11.2" height="11.2"/>
<use href="#xb" x="300.6" y="515.2" width="11.2" height="11.2"/>
<use href="#xb" x="370.6" y="515.2" width="11.2" height="11.2"/>
<use href="#xb" x="440.6" y="515.2" width="11.2" height="11.2"/>
<use href="#xb" x="510.6" y="515.2" width="11.2" height="11.2"/>
<use href="#xb" x="580.6" y="515.2" width="11.2" height="11.2"/>
</svg>
<div class="t" style="left:20.6px;top:6.9px;font-size:7.4px;color:#ececec">添加图片</div>
<div class="t" style="left:87.2px;top:6.9px;font-size:7.4px;color:#ececec">全部清除</div>
</div>
<div id="right" class="abs">
<div class="abs" style="left:0;top:0;width:2px;height:376px;background:#2b2b2d"></div>
<div class="abs" style="left:0;top:0;width:272px;height:15px;background:#2d2d30"></div>
<div class="abs" style="left:22px;top:4px;width:238px;height:5px;background:#2f2f32 radial-gradient(circle,#404044 0.55px,transparent 0.75px) 0 0/2.25px 2.5px"></div>
<div class="abs" style="left:0;top:15px;width:272px;height:14px;background:#303033"></div>
<div class="t" style="left:4px;top:2.6px;font-size:7.6px;color:#efefef">基本</div>
<svg style="left:263px;top:4px" width="6" height="7" viewBox="0 0 6 7"><path d="M1.5 0.5H4.5V3.4H1.5ZM0.3 3.6H5.7M3 3.6V6.6" fill="none" stroke="#d8d8d8" stroke-width="0.8"/></svg>
<div class="abs" style="left:2.5px;top:16px;width:23.5px;height:13.5px;background:#2b2b2d;border:1px solid #4c4c4f;border-bottom:none"></div>
<div class="t" style="left:7px;top:18.4px;font-size:7.6px;color:#636366">基本</div>
<div class="t" style="left:31px;top:18.4px;font-size:7.6px;color:#f2f2f2">高级</div>
<div class="t serif" style="left:9.6px;top:42.1px;font-size:7.9px;color:#dedede">画布大小&nbsp;&nbsp;<span style="letter-spacing:0.1px;margin-left:1px">1040x540</span></div>
<div class="abs" style="left:0.4px;top:58px;width:155px;height:44.6px;border:2.4px solid #e21e26;border-radius:1.5px"></div>
<div class="t serif" style="left:8.8px;top:64px;font-size:7.9px;color:#d8d8d8">行</div>
<div class="t serif" style="left:84.6px;top:64px;font-size:7.9px;color:#d8d8d8">列</div>
<div class="btn" style="left:9px;top:81px;width:16.5px;height:16px"></div><div class="inp" style="left:26px;top:81px;width:27.5px;height:16px">2</div><div class="btn" style="left:54px;top:81px;width:16.5px;height:16px"></div>
<div class="btn" style="left:84px;top:81px;width:16.5px;height:16px"></div><div class="inp" style="left:101px;top:81px;width:27.5px;height:16px">3</div><div class="btn" style="left:129px;top:81px;width:16.5px;height:16px"></div>
<svg style="left:9px;top:81px" width="140" height="16" viewBox="0 0 140 16"><g stroke="#cde25a" stroke-width="3" stroke-linecap="butt"><path d="M3.8 7.4H12.8"/><path d="M49.2 7.4H57.8M53.5 3.1V11.7"/><path d="M78.8 7.4H87.8"/><path d="M124.2 7.4H132.8M128.5 3.1V11.7"/></g></svg>
<!-- layout thumbnails -->
<svg style="left:9px;top:106px" width="146" height="24" viewBox="0 0 146 24"><g transform="translate(0.2 0.7) scale(0.99 0.955)">
<g id="lt1"><rect x="0.4" y="0.6" width="23" height="22.4" fill="#f0f2e6"/><rect x="1.6" y="1.8" width="9.8" height="9.4" fill="#36722c"/><rect x="12.6" y="1.8" width="9.8" height="9.4" fill="#4f8c34"/><rect x="14" y="2.6" width="4" height="3" fill="#c8402c"/><rect x="1.6" y="12.4" width="9.8" height="9.4" fill="#6fb0dc"/><path d="M1.6 21.8L6 15L11.4 21.8Z" fill="#e8f0f4"/><rect x="12.6" y="12.4" width="9.8" height="9.4" fill="#3f7c2e"/></g>
<g transform="translate(30 0)"><rect x="0.4" y="0.6" width="23" height="22.4" fill="#f0f2e6"/><g fill="#44802f"><rect x="1.4" y="1.6" width="6.4" height="6.2"/><rect x="8.8" y="1.6" width="6.4" height="6.2" fill="#7ab0d8"/><rect x="16.2" y="1.6" width="6.4" height="6.2"/><rect x="1.4" y="8.8" width="6.4" height="6.2" fill="#2f6426"/><rect x="8.8" y="8.8" width="6.4" height="6.2"/><rect x="16.2" y="8.8" width="6.4" height="6.2" fill="#c8a040"/><rect x="1.4" y="16" width="6.4" height="6.2" fill="#c84a30"/><rect x="8.8" y="16" width="6.4" height="6.2" fill="#2f6426"/><rect x="16.2" y="16" width="6.4" height="6.2"/></g></g>
<g transform="translate(60 0)"><rect x="0.4" y="0.6" width="23" height="22.4" fill="#f0f2e6"/><g fill="#44802f"><rect x="1.2" y="1.4" width="4.6" height="4.4"/><rect x="6.7" y="1.4" width="4.6" height="4.4" fill="#7ab0d8"/><rect x="12.2" y="1.4" width="4.6" height="4.4"/><rect x="17.7" y="1.4" width="4.6" height="4.4" fill="#c84a30"/><rect x="1.2" y="6.8" width="4.6" height="4.4" fill="#2f6426"/><rect x="6.7" y="6.8" width="4.6" height="4.4"/><rect x="12.2" y="6.8" width="4.6" height="4.4" fill="#c8a040"/><rect x="17.7" y="6.8" width="4.6" height="4.4"/><rect x="1.2" y="12.2" width="4.6" height="4.4" fill="#c84a30"/><rect x="6.7" y="12.2" width="4.6" height="4.4" fill="#2f6426"/><rect x="12.2" y="12.2" width="4.6" height="4.4"/><rect x="17.7" y="12.2" width="4.6" height="4.4" fill="#7ab0d8"/><rect x="1.2" y="17.6" width="4.6" height="4.4"/><rect x="6.7" y="17.6" width="4.6" height="4.4" fill="#2f2f2f"/><rect x="12.2" y="17.6" width="4.6" height="4.4" fill="#2f6426"/><rect x="17.7" y="17.6" width="4.6" height="4.4"/></g></g>
<g transform="translate(90 0)"><rect x="0.4" y="0.6" width="23" height="22.4" fill="#f0f2e6"/><g fill="#44802f"><rect x="1.2" y="1.6" width="4.6" height="6"/><rect x="6.7" y="1.6" width="4.6" height="6" fill="#7ab0d8"/><rect x="12.2" y="1.6" width="4.6" height="6"/><rect x="17.7" y="1.6" width="4.6" height="6" fill="#c8a040"/><rect x="1.2" y="8.8" width="4.6" height="6" fill="#2f6426"/><rect x="6.7" y="8.8" width="4.6" height="6"/><rect x="12.2" y="8.8" width="4.6" height="6" fill="#c84a30"/><rect x="17.7" y="8.8" width="4.6" height="6"/><rect x="1.2" y="16" width="4.6" height="6" fill="#7ab0d8"/><rect x="6.7" y="16" width="4.6" height="6" fill="#2f2f2f"/><rect x="12.2" y="16" width="4.6" height="6" fill="#2f6426"/><rect x="17.7" y="16" width="4.6" height="6"/></g></g>
<g transform="translate(120 0)"><rect x="0.4" y="0.6" width="24" height="22.4" fill="#f0f2e6"/><g fill="#44802f"><rect x="1.4" y="1.4" width="6.6" height="4.4"/><rect x="9.1" y="1.4" width="6.6" height="4.4" fill="#7ab0d8"/><rect x="16.8" y="1.4" width="6.6" height="4.4"/><rect x="1.4" y="6.8" width="6.6" height="4.4" fill="#2f6426"/><rect x="9.1" y="6.8" width="6.6" height="4.4"/><rect x="16.8" y="6.8" width="6.6" height="4.4" fill="#c8a040"/><rect x="1.4" y="12.2" width="6.6" height="4.4" fill="#c84a30"/><rect x="9.1" y="12.2" width="6.6" height="4.4" fill="#2f6426"/><rect x="16.8" y="12.2" width="6.6" height="4.4"/><rect x="1.4" y="17.6" width="6.6" height="4.4"/><rect x="9.1" y="17.6" width="6.6" height="4.4" fill="#2f2f2f"/><rect x="16.8" y="17.6" width="6.6" height="4.4" fill="#7ab0d8"/></g></g>
</g></svg>
<!-- dropdowns -->
<div class="inp" style="left:9.5px;top:141.5px;width:131.5px;height:12px;padding:0 0 0 1.5px;font-size:7.25px">自定义单元格图片大小</div>
<div class="inp" style="left:149px;top:141.5px;width:61px;height:12px;padding:0 0 0 1.5px;font-size:7.5px">320x240</div>
<svg style="left:130px;top:145.5px" width="80" height="5" viewBox="0 0 80 5"><path d="M2.2 1L6.2 1L4.2 3.6Z" fill="#f2f2f2"/><path d="M70.4 1L74.4 1L72.4 3.6Z" fill="#f2f2f2"/></svg>
<div class="t serif" style="left:9.6px;top:165.4px;font-size:7.9px;color:#d8d8d8">单元格宽度</div>
<div class="t serif" style="left:84.6px;top:165.4px;font-size:7.9px;color:#d8d8d8">单元格高度</div>
<div class="inp" style="left:9.5px;top:183px;width:27px;height:15.5px">320</div>
<div class="t serif" style="left:56.6px;top:187px;font-size:8.4px;color:#d0d0d0">X</div>
<div class="inp" style="left:84.5px;top:183px;width:27px;height:15.5px">240</div>
<div class="btn" style="left:148.5px;top:181.5px;width:61.5px;height:17px"></div>
<div class="t serif" style="left:161px;top:185.4px;font-size:7.9px;color:#dcdcdc">旋转&nbsp; 90°</div>
<div class="t serif" style="left:9.6px;top:210.4px;font-size:7.9px;color:#d8d8d8">边距调节</div>
<div class="inp" style="left:9.5px;top:228px;width:27px;height:15.5px">20</div>
<div class="abs" style="left:43.5px;top:234px;width:140px;height:3.2px;background:#c8c8c8;border-radius:1px"></div>
<div class="abs" style="left:57px;top:228px;width:7.6px;height:15.2px;background:#c9c9c9;border:0.5px solid #e2e2e2"></div>
<!-- side grip -->
<div class="abs" style="left:261px;top:341px;width:11px;height:28.5px;background:#101010"></div>
<svg style="left:261px;top:341px" width="11" height="29" viewBox="0 0 11 29"><rect x="4.6" y="4" width="2.4" height="9" fill="none" stroke="#3c3c3c" stroke-width="0.6"/><rect x="4.6" y="15" width="2.4" height="9" fill="none" stroke="#3c3c3c" stroke-width="0.6"/></svg>
</div>
<div id="imgpanel" class="abs">
<div class="abs" style="left:0;top:0;width:2px;height:152px;background:#2b2b2d"></div>
<div class="abs" style="left:2px;top:0;width:270px;height:2.8px;background:#686868"></div>
<div class="abs" style="left:2px;top:2.8px;width:270px;height:14.6px;background:#2d2d30"></div>
<div class="abs" style="left:22px;top:8px;width:238px;height:5px;background:#2f2f32 radial-gradient(circle,#404044 0.55px,transparent 0.75px) 0 0/2.25px 2.5px"></div>
<div class="t" style="left:4.6px;top:6.4px;font-size:7.6px;color:#efefef">图像</div>
<svg style="left:263px;top:7px" width="6" height="7" viewBox="0 0 6 7"><path d="M1.5 0.5H4.5V3.4H1.5ZM0.3 3.6H5.7M3 3.6V6.6" fill="none" stroke="#d8d8d8" stroke-width="0.8"/></svg>
<svg style="left:100px;top:17px" width="76" height="135" viewBox="908 437 76 135">
<use href="#p3f" x="914" y="437.2" width="62.4" height="135"/>
<rect x="914" y="443.6" width="63.4" height="47.2" fill="none" stroke="#4fabdd" stroke-width="1.5"/>
</svg>
</div>
<div id="status" class="abs">
<div class="t" style="left:4.6px;top:4.2px;font-size:7.5px;color:#f0f0f0">就绪</div>
<svg style="left:818px;top:1px" width="262" height="13" viewBox="818 573 262 13">
<!-- clipboard -->
<rect x="819.6" y="575" width="7.6" height="9.6" rx="0.8" fill="#c9902f"/><rect x="821.4" y="574" width="4" height="2" fill="#7d7d7d"/><rect x="822" y="577.4" width="6.6" height="7.6" fill="#f1f3f5" stroke="#9fa6ad" stroke-width="0.4"/><path d="M823 579.4H827.4M823 581H827.4M823 582.6H826" stroke="#6e8fb8" stroke-width="0.5"/>
<!-- mail -->
<rect x="884" y="575.6" width="10.6" height="7.6" fill="#f2a436" stroke="#fbd38a" stroke-width="0.5"/><path d="M884.2 575.8H894.4L889.3 580.4Z" fill="#f9efe2"/>
<!-- printer -->
<rect x="937" y="574" width="6.4" height="3" fill="#f4f5f6"/><rect x="935" y="576.6" width="10.4" height="5.2" rx="0.8" fill="#cfd5dc"/><rect x="937" y="577.6" width="6.4" height="1.8" fill="#2f9be2"/><rect x="937" y="580.2" width="6.4" height="4.2" fill="#f4f5f6"/>
<!-- magnifier -->
<path d="M975 580L979.2 584.6" stroke="#b8a070" stroke-width="1.8" stroke-linecap="round"/><circle cx="972.8" cy="577.8" r="3.5" fill="#d6ecfa" stroke="#d8dce2" stroke-width="1"/>
<!-- zoom slider -->
<path d="M1017.6 580H1021.4" stroke="#cfcfcf" stroke-width="0.8"/><rect x="1028" y="579.6" width="36" height="1" fill="#8c8c8c"/><rect x="1042.6" y="574.6" width="5.4" height="10.6" fill="#c9c9c9"/><path d="M1069.6 580H1074M1071.8 577.8V582.2" stroke="#cfcfcf" stroke-width="0.8"/>
</svg>
<div class="t" style="left:831px;top:3.6px;font-size:7.9px;color:#f0f0f0">复制到剪切板</div>
<div class="t" style="left:897px;top:3.6px;font-size:7.8px;color:#f0f0f0">电子邮件</div>
<div class="t" style="left:947.6px;top:3.6px;font-size:7.8px;color:#f0f0f0">打印</div>
<div class="t" style="left:982px;top:3.6px;font-size:8px;color:#f0f0f0">100%</div>
</div>
</body>
</html>
